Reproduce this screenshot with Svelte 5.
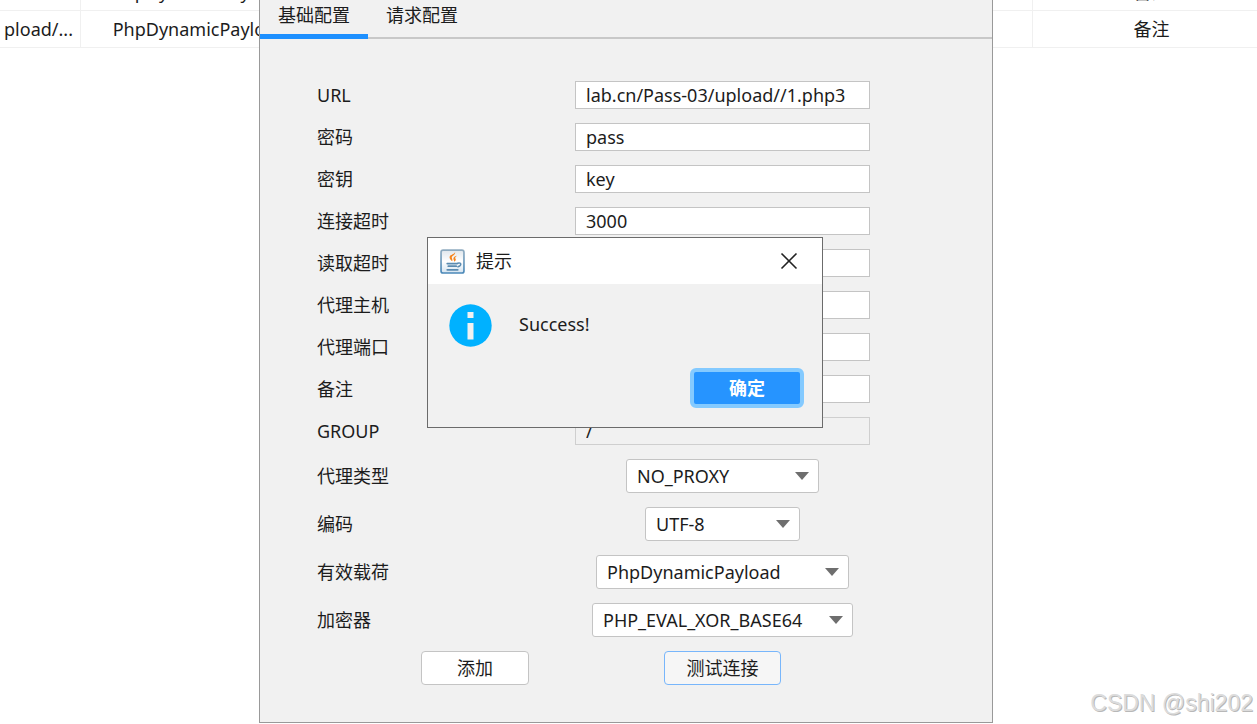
<script lang="ts">
  type Field = { id: string; label: string; value: string; disabled?: boolean };
  type Choice = { id: string; label: string; value: string; width: number };

  const rows = [
    { url: "load/...", payload: "PhpDynamicPayload", remark: "备注" },
    { url: "pload/...", payload: "PhpDynamicPayload", remark: "备注" },
  ];

  let fields: Field[] = $state([
    { id: "url", label: "URL", value: "lab.cn/Pass-03/upload//1.php3" },
    { id: "password", label: "密码", value: "pass" },
    { id: "key", label: "密钥", value: "key" },
    { id: "conn-timeout", label: "连接超时", value: "3000" },
    { id: "read-timeout", label: "读取超时", value: "" },
    { id: "proxy-host", label: "代理主机", value: "" },
    { id: "proxy-port", label: "代理端口", value: "" },
    { id: "remark", label: "备注", value: "" },
    { id: "group", label: "GROUP", value: "/", disabled: true },
  ]);

  const choices: Choice[] = [
    { id: "proxy-type", label: "代理类型", value: "NO_PROXY", width: 193 },
    { id: "encoding", label: "编码", value: "UTF-8", width: 155 },
    { id: "payload", label: "有效载荷", value: "PhpDynamicPayload", width: 253 },
    { id: "cryption", label: "加密器", value: "PHP_EVAL_XOR_BASE64", width: 261 },
  ];

  let showMessage = $state(true);
</script>

<div class="desktop">
  <div class="shells">
    <table>
      <colgroup>
        <col class="first" />
        <col /><col /><col /><col /><col />
      </colgroup>
      <tbody>
        {#each rows as row}
          <tr>
            <td class="url">{row.url}</td>
            <td>{row.payload}</td>
            <td></td>
            <td></td>
            <td></td>
            <td>{row.remark}</td>
          </tr>
        {/each}
      </tbody>
    </table>
  </div>

  <section class="window">
    <div class="tabs" role="tablist">
      <button class="tab active" role="tab" aria-selected="true">基础配置</button>
      <button class="tab" role="tab" aria-selected="false">请求配置</button>
    </div>

    <form onsubmit={(e) => e.preventDefault()}>
      {#each fields as field}
        <div class="row">
          <label for={field.id}>{field.label}</label>
          <input id={field.id} type="text" bind:value={field.value} disabled={field.disabled} />
        </div>
      {/each}
      {#each choices as choice}
        <div class="row">
          <label for={choice.id}>{choice.label}</label>
          <div class="combo" style={`width: ${choice.width}px`}>
            <select id={choice.id}>
              <option>{choice.value}</option>
            </select>
            <svg width="14" height="8" viewBox="0 0 14 8" aria-hidden="true">
              <path d="M0 0h14L7 8z" fill="#6e6e6e" />
            </svg>
          </div>
        </div>
      {/each}
      <div class="actions">
        <button class="add" type="button">添加</button>
        <button class="test" type="button" onclick={() => (showMessage = true)}>测试连接</button>
      </div>
    </form>
  </section>

  {#if showMessage}
    <div class="message" role="dialog" aria-labelledby="message-title">
      <header>
        <svg width="25" height="25" viewBox="0 0 24 24" aria-hidden="true">
          <defs>
            <linearGradient id="java-bg" x1="0" y1="0" x2="0" y2="1">
              <stop offset="0" stop-color="#dfe6ec" />
              <stop offset="0.5" stop-color="#fff" />
              <stop offset="1" stop-color="#d5e4f0" />
            </linearGradient>
            <linearGradient id="java-edge" x1="0" y1="0" x2="0" y2="1">
              <stop offset="0" stop-color="#8fabc0" />
              <stop offset="1" stop-color="#4a88b8" />
            </linearGradient>
          </defs>
          <rect x="1" y="1" width="22" height="22" rx="2" fill="url(#java-bg)" stroke="url(#java-edge)" stroke-width="1.6" />
          <path d="M14.500 3c.6 3-3.500 3.200-3.200 5.200.1 1 .9 1.600.5 3.600-1.600-1.300-3-2.500-2.500-4.500.6-2 4.200-2.200 5.200-4.300zM16.500 6.500c-1.600 1-2.300 1.800-1.600 2.900.7 1.300 0 2.200-1.400 2.900.2-1.300-.9-1.900-.6-3.300.3-1.400 1.700-2.200 3.600-2.500z" fill="#f5851f" />
          <g fill="none" stroke-linecap="round" stroke="#5b8bb0">
            <path d="M7 14h9.500M8 16.500h7.500M7 20h10" stroke-width="1.800" />
            <path d="M17 13.600c4.200-.9 3.600 2.600.2 3.500" stroke-width="1.400" />
          </g>
        </svg>
        <h2 id="message-title">提示</h2>
        <button class="close" aria-label="关闭" onclick={() => (showMessage = false)}>
          <svg width="18" height="18" viewBox="0 0 18 18">
            <path d="M1.500 1.500l15 15M16.500 1.500l-15 15" stroke="#222" stroke-width="1.600" />
          </svg>
        </button>
      </header>
      <div class="body">
        <svg width="43" height="43" viewBox="0 0 43 43" aria-hidden="true">
          <circle cx="21.500" cy="21.500" r="21.200" fill="#00b1ff" />
          <path d="M18.500 8h6v6h-6zM18.500 19h6v16.500h-6z" fill="#f1f1f1" />
        </svg>
        <p>Success!</p>
      </div>
      <footer>
        <button class="ok" onclick={() => (showMessage = false)}>确定</button>
      </footer>
    </div>
  {/if}

  <div class="watermark">CSDN @shi202</div>
</div>

<style>
  :global(body) {
    margin: 0;
    background: #fff;
  }
  .desktop {
    position: relative;
    height: 100vh;
    overflow: hidden;
    color: #1c1c1c;
    font: 18px/24px "Noto Sans", "Noto Sans CJK SC", sans-serif;
  }
  button,
  input,
  select {
    box-sizing: border-box;
    margin: 0;
    font: inherit;
    color: inherit;
  }

  /* list of shells, scrolled to its last rows */
  .shells {
    display: flex;
    flex-direction: column;
    justify-content: flex-end;
    height: 48px;
    overflow: hidden;
  }
  table {
    flex: none;
    width: calc(100% + 14px);
    table-layout: fixed;
    border-collapse: separate;
    border-spacing: 0;
  }
  .first {
    width: 81px;
  }
  td {
    box-sizing: border-box;
    height: 37px;
    padding: 0;
    border-right: 1px solid #f0f0f0;
    border-bottom: 1px solid #f0f0f0;
    text-align: center;
    white-space: nowrap;
  }
  td.url {
    padding-right: 7px;
    text-align: right;
  }

  .window {
    position: absolute;
    top: -10px;
    left: 259px;
    box-sizing: border-box;
    width: 734px;
    border: 1px solid #999;
    background: #f1f1f1;
  }
  .tabs {
    display: flex;
    box-shadow: inset 0 -2px #c8c8c8;
  }
  .tab {
    height: 48px;
    padding: 0 18px;
    border: 0;
    background: none;
  }
  .tab.active {
    box-shadow: inset 0 -5px #1e90ff;
  }

  form {
    display: flex;
    flex-direction: column;
    gap: 14px;
    padding: 42px 122px 37px 57px;
  }
  .row {
    display: grid;
    grid-template-columns: 1fr 295px;
    align-items: center;
  }
  input {
    width: 100%;
    height: 28px;
    padding: 0 10px;
    border: 1px solid #c4c4c4;
    background: #fff;
  }
  input:disabled {
    border-color: #cfcfcf;
    background: #f1f1f1;
  }
  .combo {
    display: grid;
    align-items: center;
    justify-self: center;
  }
  .combo > * {
    grid-area: 1 / 1;
  }
  .combo svg {
    justify-self: end;
    margin-right: 10px;
    pointer-events: none;
  }
  select {
    appearance: none;
    width: 100%;
    height: 34px;
    padding: 0 10px;
    border: 1px solid #c4c4c4;
    border-radius: 3px;
    background: #fff;
  }
  .actions {
    display: flex;
    justify-content: flex-end;
    gap: 135px;
    padding-right: 89px;
  }
  .actions button {
    height: 34px;
    border: 1px solid #c4c4c4;
    border-radius: 4px;
    background: #fff;
  }
  .actions .add {
    width: 108px;
  }
  .actions .test {
    width: 117px;
    padding: 0;
    border-color: #78b6fb;
    background: #f6f6f6;
  }

  .message {
    position: absolute;
    top: 237px;
    left: 427px;
    box-sizing: border-box;
    width: 396px;
    border: 1px solid #6b6b6b;
    background: #f1f1f1;
  }
  header {
    display: flex;
    align-items: center;
    gap: 11px;
    height: 46px;
    padding: 0 24px 0 12px;
    background: #fff;
  }
  h2 {
    flex: 1;
    margin: 0;
    font: inherit;
  }
  .close {
    display: flex;
    padding: 0;
    border: 0;
    background: none;
  }
  .body {
    display: flex;
    gap: 27px;
    padding: 20px 21px 0;
  }
  .body p {
    margin: 8px 0 0;
  }
  footer {
    display: flex;
    justify-content: flex-end;
    padding: 21px 18px 19px;
  }
  .ok {
    width: 114px;
    height: 40px;
    padding: 0;
    border: 4px solid #84caff;
    border-radius: 6px;
    background: #2694ff;
    color: #fff;
    font-weight: bold;
  }

  .watermark {
    position: absolute;
    right: 4px;
    bottom: 8px;
    color: #dcdcdc;
    font: 23px/26px "Liberation Sans", Arial, sans-serif;
    text-shadow: 1px 1px #b8b8b8;
  }
</style>
